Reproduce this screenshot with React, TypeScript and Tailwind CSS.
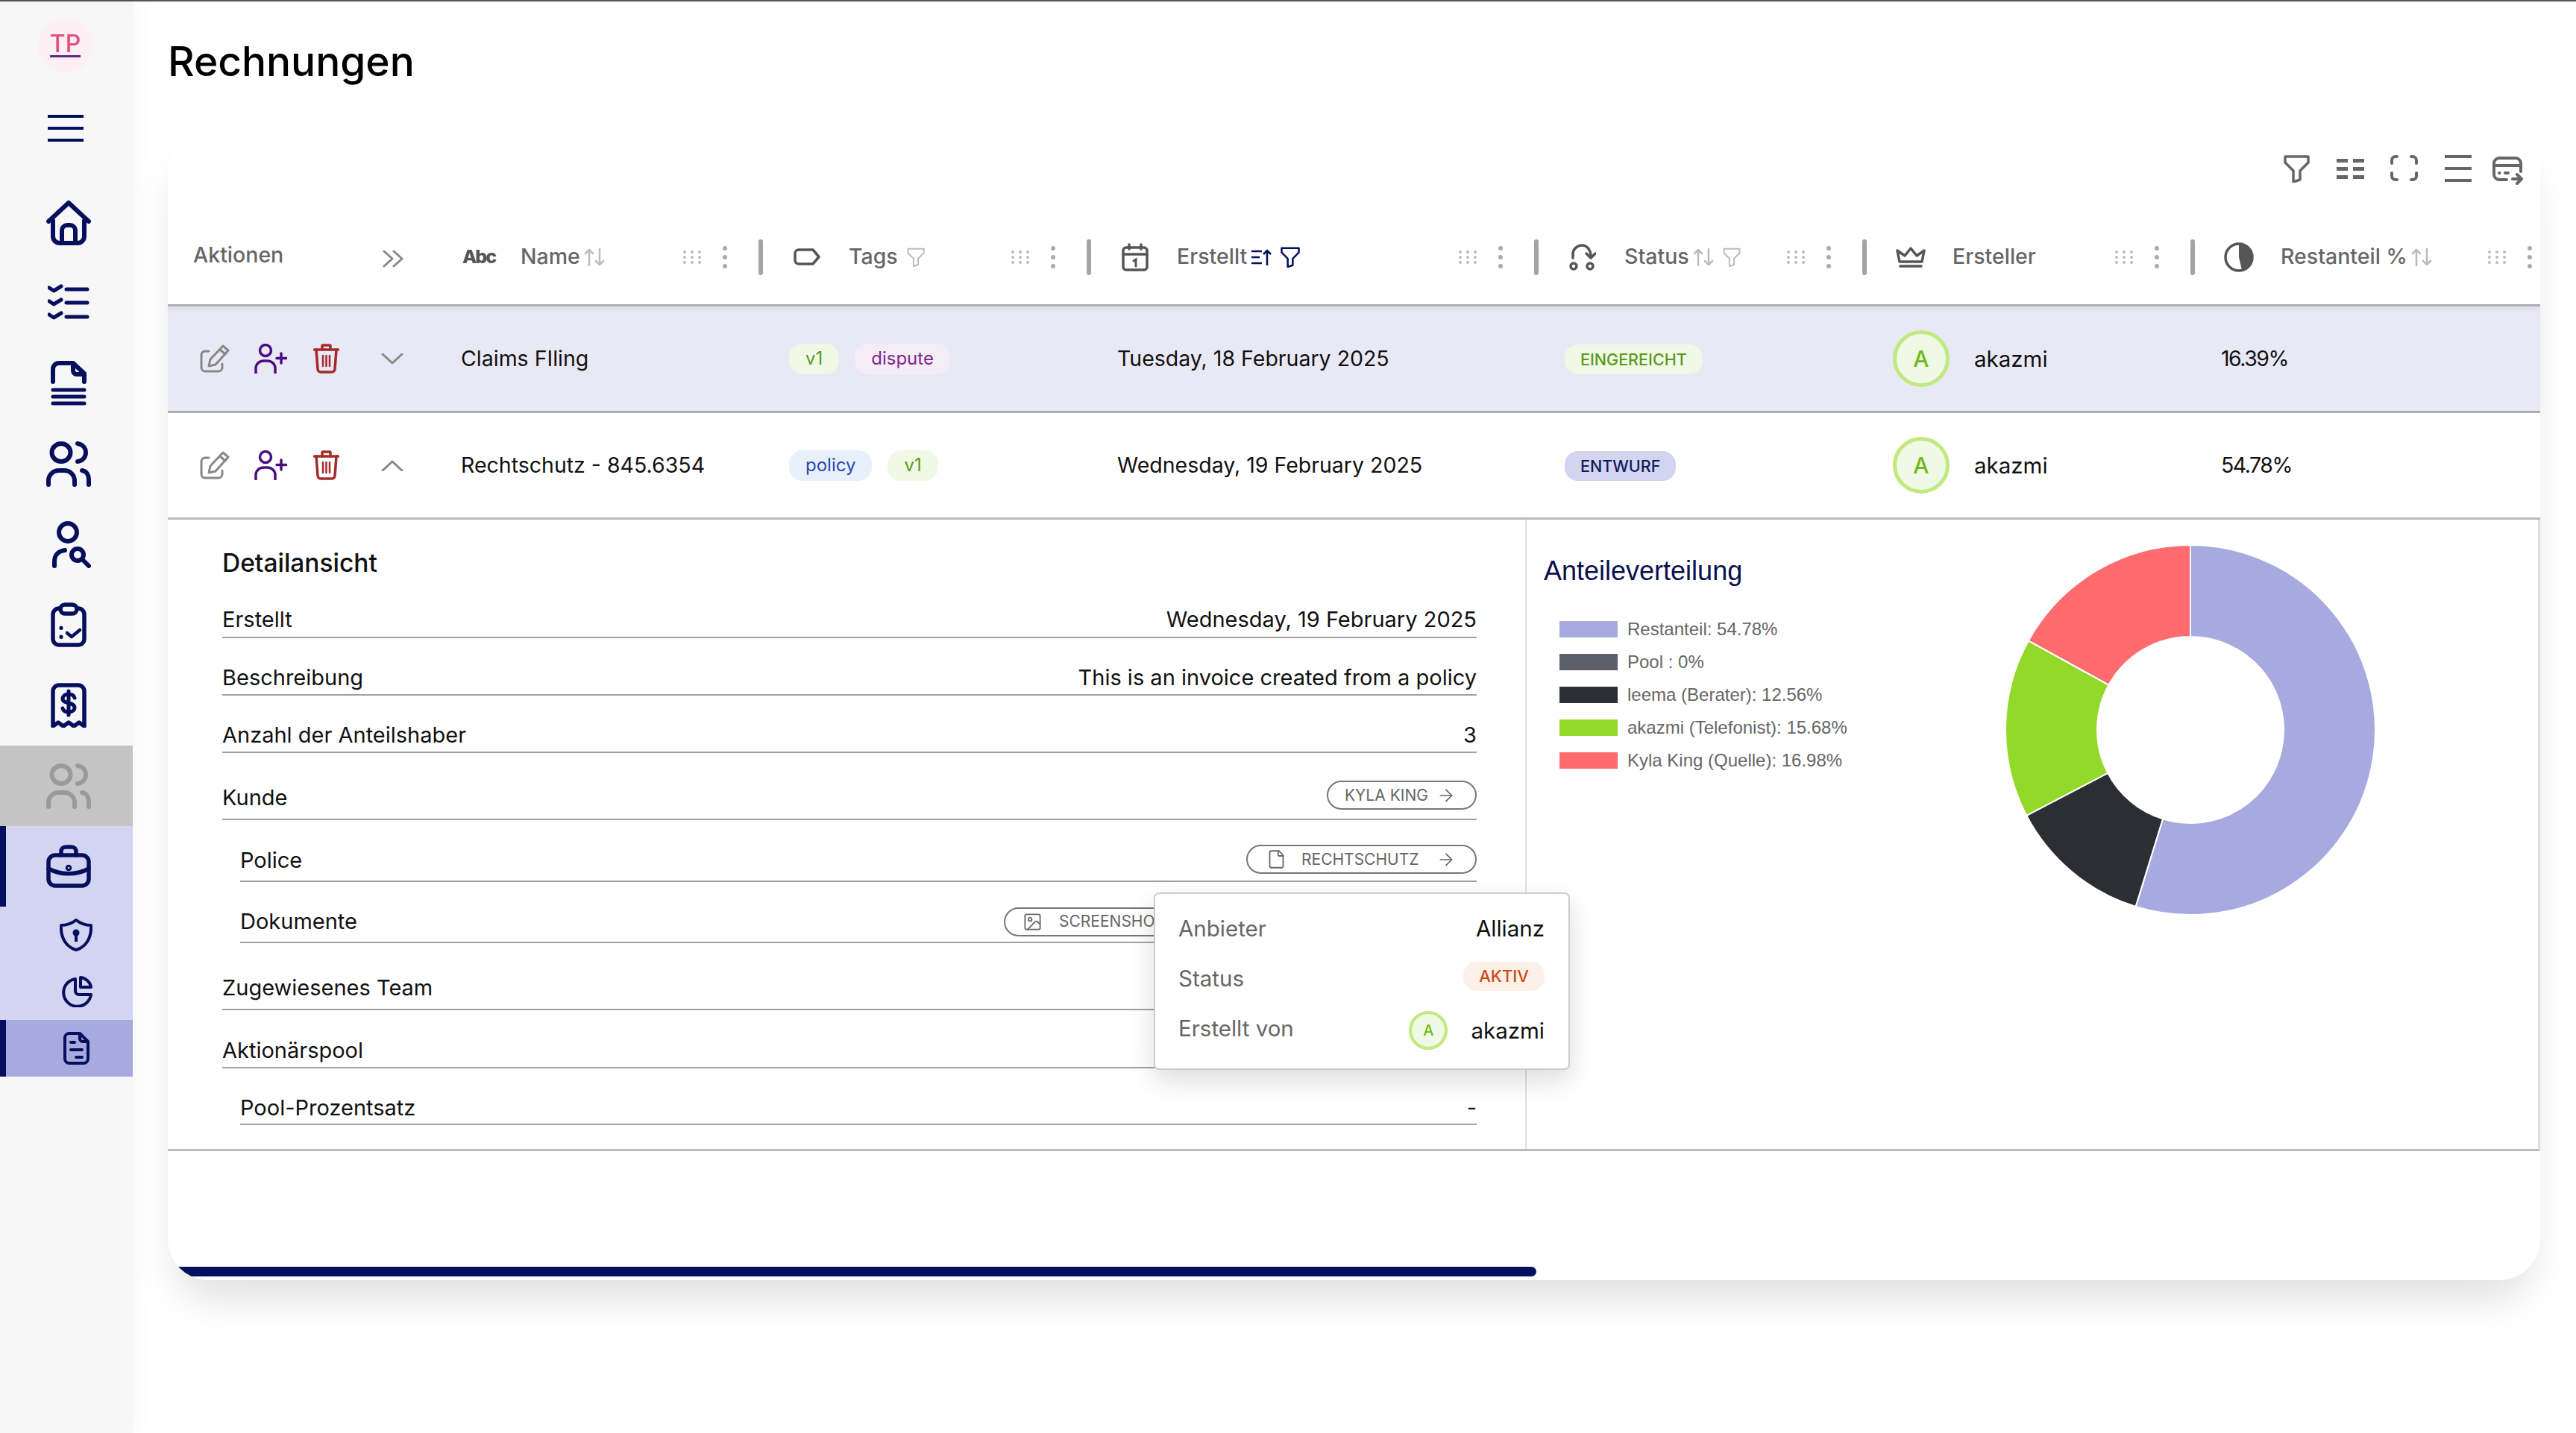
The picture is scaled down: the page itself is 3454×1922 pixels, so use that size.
import React from 'react'
import { ArrowRight, File, Image } from 'lucide-react'

const navy = '#050f5c'

const HomeIcon = () => (
  <svg width="60" height="61" viewBox="0 0 60 61" fill="none" stroke="currentColor" strokeWidth="6" strokeLinecap="round" strokeLinejoin="round">
    <path d="M3 29 30 4l27 25" />
    <path d="M9 28v21a9 9 0 0 0 9 9h24a9 9 0 0 0 9-9V28" />
    <path d="M21 58V41a7 7 0 0 1 7-7h4a7 7 0 0 1 7 7v17" />
  </svg>
)
const ListIcon = () => (
  <svg width="56" height="50" viewBox="0 0 56 50" fill="none" stroke="currentColor" strokeWidth="5" strokeLinecap="round" strokeLinejoin="round">
    <path d="M2 5l6 4 10-6M2 23l6 4 10-6M2 41l6 4 10-6" />
    <path d="M25 7h28M25 25h28M25 44h28" />
  </svg>
)
const DocStackIcon = () => (
  <svg width="48" height="60" viewBox="0 0 48 60" fill="none" stroke="currentColor" strokeLinecap="round" strokeLinejoin="round">
    <path strokeWidth="6" d="M3 28V11a8 8 0 0 1 8-8h19l15 14v11" />
    <path strokeWidth="6" d="M30 4v9a5 5 0 0 0 5 5h9" />
    <path strokeWidth="5" d="M3 39h42M3 48h42M3 57h42" />
  </svg>
)
const UsersIcon = () => (
  <svg width="60" height="61" viewBox="0 0 60 61" fill="none" stroke="currentColor" strokeWidth="6" strokeLinecap="round">
    <ellipse cx="20" cy="15" rx="12.5" ry="12" />
    <path d="M42 3c7 1 11 6 11 12s-4 11-11 12" />
    <path d="M3 58v-5c0-8 6-14 14-14h7c8 0 14 6 14 14v5" />
    <path d="M48 39c6 1 9 6 9 12v7" />
  </svg>
)
const UserSearchIcon = () => (
  <svg width="52" height="63" viewBox="0 0 52 63" fill="none" stroke="currentColor" strokeWidth="6" strokeLinecap="round">
    <circle cx="21" cy="15" r="12" />
    <path d="M3 60v-6c0-8 5-14 14-15" />
    <circle cx="34" cy="45" r="8" />
    <path d="M40 51l9 9" />
  </svg>
)
const ClipboardIcon = () => (
  <svg width="48" height="60" viewBox="0 0 48 60" fill="none" stroke="currentColor" strokeLinecap="round" strokeLinejoin="round">
    <path strokeWidth="5.5" d="M12 8h-1a8 8 0 0 0-8 8v33a8 8 0 0 0 8 8h26a8 8 0 0 0 8-8V16a8 8 0 0 0-8-8h-1" />
    <rect strokeWidth="5.5" x="13" y="3" width="22" height="12" rx="6" />
    <path strokeWidth="4.5" d="M22 41l6 5 11-9" />
    <path strokeWidth="5" d="M14 34v.5M14 46v.5" />
  </svg>
)
const ReceiptIcon = () => (
  <svg width="48" height="60" viewBox="0 0 48 60" fill="none" stroke="currentColor" strokeLinejoin="round" strokeLinecap="round">
    <path strokeWidth="5.5" d="M3 58V11a8 8 0 0 1 8-8h26a8 8 0 0 1 8 8v47l-7-5-7 5-7-5-7 5-7-5-7 5z" />
    <path strokeWidth="5" d="M32 20c-1-4-5-5-8-5-5 0-8 3-8 6 0 8 16 4 16 12 0 4-4 6-8 6-3 0-7-1-8-5M24 11v32" />
  </svg>
)
const BriefcaseIcon = () => (
  <svg width="60" height="58" viewBox="0 0 60 58" fill="none" stroke="currentColor" strokeWidth="5.5" strokeLinecap="round">
    <rect x="3" y="14" width="54" height="41" rx="9" />
    <path d="M20 14V9a6 6 0 0 1 6-6h8a6 6 0 0 1 6 6v5" />
    <path d="M3 32c16 9 38 9 54 0" />
    <circle cx="30" cy="31" r="1.5" />
  </svg>
)
const ShieldIcon = () => (
  <svg width="44" height="44" viewBox="0 0 44 44" fill="none" stroke="currentColor" strokeWidth="4" strokeLinejoin="round">
    <path d="M22 2c5 4 13 7 20 7 1 16-6 29-20 33C8 38 1 25 2 9c7 0 15-3 20-7z" />
    <circle cx="22" cy="19" r="4.5" fill="currentColor" stroke="none" />
    <rect x="20" y="20" width="4" height="11" fill="currentColor" stroke="none" />
  </svg>
)
const PieIcon = () => (
  <svg width="44" height="42" viewBox="0 0 44 42" fill="none" stroke="currentColor" strokeWidth="4" strokeLinejoin="round" strokeLinecap="round">
    <path d="M21 4A18.500 18.500 0 1 0 42 25H26a5 5 0 0 1-5-5z" />
    <path d="M28 2v13h14C41 8 35 3 28 2z" />
  </svg>
)
const InvoiceIcon = () => (
  <svg width="35" height="44" viewBox="0 0 35 44" fill="none" stroke="currentColor" strokeWidth="4" strokeLinecap="round" strokeLinejoin="round">
    <path d="M2 8a6 6 0 0 1 6-6h14l11 11v23a6 6 0 0 1-6 6H8a6 6 0 0 1-6-6z" />
    <path d="M22 3v6a4 4 0 0 0 4 4h6" />
    <path d="M10 14h5M10 24h15M17 34h8" />
  </svg>
)
const Hamburger = () => (
  <svg width="48" height="36" viewBox="0 0 48 36" fill="currentColor">
    <rect y="0" width="48" height="4" />
    <rect y="16" width="48" height="4" />
    <rect y="32" width="48" height="4" />
  </svg>
)

const Funnel = ({ size = 35, color = '#666', sw = 3.5 }: { size?: number; color?: string; sw?: number }) => (
  <svg width={size} height={size + 2} viewBox="0 0 35 37" fill="none" stroke={color} strokeWidth={sw * 35 / size} strokeLinejoin="round">
    <path d="M2 2h31v8L22 21v12l-9 3V21L2 10z" />
  </svg>
)
const ColumnsIcon = () => (
  <svg width="37" height="27" viewBox="0 0 37 27" fill="#666">
    <rect width="15" height="5" />
    <rect x="22" width="15" height="5" />
    <rect y="11" width="15" height="5" />
    <rect x="22" y="11" width="15" height="5" />
    <rect y="22" width="15" height="5" />
    <rect x="22" y="22" width="15" height="5" />
  </svg>
)
const FullscreenIcon = () => (
  <svg width="37" height="35" viewBox="0 0 37 35" fill="none" stroke="#666" strokeWidth="4" strokeLinecap="round">
    <path d="M9 2H7a5 5 0 0 0-5 5v4M28 2h2a5 5 0 0 1 5 5v4M9 33H7a5 5 0 0 1-5-5v-4M28 33h2a5 5 0 0 0 5-5v-4" />
  </svg>
)
const DensityIcon = () => (
  <svg width="36" height="36" viewBox="0 0 36 36" fill="#666">
    <rect width="36" height="4" />
    <rect y="16" width="36" height="4" />
    <rect y="32" width="36" height="4" />
  </svg>
)
const ExportIcon = () => (
  <svg width="42" height="38" viewBox="0 0 42 38" fill="none" stroke="#666" strokeWidth="4" strokeLinecap="round" strokeLinejoin="round">
    <path d="M38 20V9a7 7 0 0 0-7-7H9a7 7 0 0 0-7 7v15a7 7 0 0 0 7 7h10" />
    <path d="M2 12h36" />
    <path d="M9 22h.5M17 22h4" />
    <path d="M27 30h12M33 24l6 6-6 6" />
  </svg>
)
const SortIcon = () => (
  <svg width="28" height="24" viewBox="0 0 28 24" fill="none" stroke="#bbb" strokeWidth="2.5" strokeLinecap="round" strokeLinejoin="round">
    <path d="M7 23V2M2 7l5-5 5 5" />
    <path d="M21 1v21M16 17l5 5 5-5" />
  </svg>
)
const SortActiveIcon = () => (
  <svg width="28" height="24" viewBox="0 0 28 24" fill="none" stroke={navy} strokeWidth="2.5">
    <path d="M1 4h14M1 12h11M1 20h14" />
    <path d="M22 23V3M17 8l5-5 5 5" />
  </svg>
)
const DragDots = () => (
  <span className="grid grid-cols-3 gap-x-[6px] gap-y-[3px] w-[24px]">
    {Array.from({ length: 9 }).map((_, i) => (
      <span key={i} className="w-[4px] h-[4px] rounded-full bg-[#bbb]" />
    ))}
  </span>
)
const VerticalDots = () => (
  <span className="flex flex-col gap-[6px]">
    <span className="w-[6px] h-[6px] rounded-full bg-[#aaa]" />
    <span className="w-[6px] h-[6px] rounded-full bg-[#aaa]" />
    <span className="w-[6px] h-[6px] rounded-full bg-[#aaa]" />
  </span>
)

const TagIcon = () => (
  <svg width="36" height="23" viewBox="0 0 36 23" fill="none" stroke="#555" strokeWidth="3.5" strokeLinejoin="round">
    <path d="M7 2h19l8 9.500-8 9.500H7a5 5 0 0 1-5-5V7a5 5 0 0 1 5-5z" />
  </svg>
)
const CalendarIcon = () => (
  <svg width="36" height="38" viewBox="0 0 36 38" fill="none" stroke="#555" strokeWidth="3.5" strokeLinecap="round">
    <rect x="2" y="6" width="32" height="30" rx="4" />
    <path d="M2 15h32M10 2v6M26 2v6" />
    <path strokeWidth="3" d="M16 24l3-2v9" />
  </svg>
)
const StatusIcon = () => (
  <svg width="36" height="36" viewBox="0 0 36 36" fill="none" stroke="#555" strokeWidth="3.5" strokeLinecap="round" strokeLinejoin="round">
    <circle cx="6" cy="30" r="4" />
    <circle cx="28" cy="30" r="4" />
    <path d="M5 19v-5C5 7 11 2 17 2c7 0 12 6 12 15" />
    <path d="M23 13l6 6 6-6" />
  </svg>
)
const CrownIcon = () => (
  <svg width="40" height="28" viewBox="0 0 40 28" fill="none" stroke="#555" strokeWidth="3.5" strokeLinejoin="round" strokeLinecap="round">
    <path d="M5 20L2 5l10 7 8-10 8 10 10-7-3 15z" />
    <path d="M6 26h28" />
  </svg>
)
const ShareIcon = () => (
  <svg width="40" height="40" viewBox="0 0 40 40">
    <circle cx="20" cy="20" r="18" fill="none" stroke="#555" strokeWidth="3.5" />
    <path d="M20 20V2a18 18 0 0 1 4 35.500z" fill="#555" />
  </svg>
)

const EditIcon = () => (
  <svg width="40" height="38" viewBox="0 0 40 38" fill="none" stroke="#888" strokeWidth="3" strokeLinecap="round" strokeLinejoin="round">
    <path d="M12 9H7a5 5 0 0 0-5 5v17a5 5 0 0 0 5 5h18a5 5 0 0 0 5-5v-5" />
    <path d="M31 2l7 6-17 19-9 2 2-9z" />
    <path d="M27 7l7 6" />
  </svg>
)
const PersonPlusIcon = () => (
  <svg width="44" height="40" viewBox="0 0 44 40" fill="none" stroke="#4b0e82" strokeWidth="3.5" strokeLinecap="round">
    <circle cx="15" cy="9" r="7.500" />
    <path d="M2 39v-6c0-6 5-10 11-10h4c6 0 11 4 11 10v6" />
    <path d="M36 13v13M30 19.500h13" />
  </svg>
)
const TrashIcon = () => (
  <svg width="35" height="40" viewBox="0 0 35 40" fill="none" stroke="#a52a2a" strokeWidth="3.5" strokeLinecap="round" strokeLinejoin="round">
    <path d="M1.500 8h32" />
    <path d="M12 8V3a1 1 0 0 1 1-1h9a1 1 0 0 1 1 1v5" />
    <path d="M4 8l2 26a4 4 0 0 0 4 4h15a4 4 0 0 0 4-4l2-26" />
    <path strokeWidth="2.500" d="M13 16v14M17.500 16v14M22 16v14" />
  </svg>
)
const Chevron = ({ up }: { up?: boolean }) => (
  <svg width="30" height="15" viewBox="0 0 30 15" fill="none" stroke="#888" strokeWidth="3" strokeLinecap="round" strokeLinejoin="round">
    <path d={up ? 'M2 14 15 2l13 12' : 'M2 1l13 12L28 1'} />
  </svg>
)
const DoubleChevron = () => (
  <svg width="28" height="24" viewBox="0 0 28 24" fill="none" stroke="#888" strokeWidth="3" strokeLinecap="round" strokeLinejoin="round">
    <path d="M2 2l11 10L2 22M15 2l11 10-11 10" />
  </svg>
)

const HeaderCell = ({ label, icon, sort, filter, sep = true, last }: { label: string; icon: React.ReactNode; sort?: React.ReactNode; filter?: React.ReactNode; sep?: boolean; last?: boolean }) => (
  <div className="flex items-center h-full">
    {sep && <span className="w-[6px] h-[48px] -ml-[3px] -mr-[3px] rounded-full bg-[#a4a4a4]" />}
    <span className="ml-[42px] w-[40px] flex justify-center">{icon}</span>
    <span className="ml-[36px] text-[#666] text-[28.500px] font-medium whitespace-nowrap">{label}</span>
    {sort && <span className="ml-[5px] flex">{sort}</span>}
    {filter && <span className="ml-[12px] flex">{filter}</span>}
    <span className={`ml-auto flex items-center gap-[29px] ${last ? 'pr-[11px]' : 'pr-[45px]'}`}>
      <DragDots />
      <VerticalDots />
    </span>
  </div>
)

const Chip = ({ bg, color, children }: { bg: string; color: string; children: string }) => (
  <span className={`${bg} ${color} h-[41px] px-[22px] rounded-[18px] flex items-center text-[24px]`}>{children}</span>
)

const Avatar = () => (
  <span className="w-[76px] h-[76px] rounded-full border-[5px] border-[#c0e97e] bg-[#f0f9e6] text-[#6cbb1a] text-[30px] font-medium flex items-center justify-center">A</span>
)

const Row = ({ up, name, chips, date, status, percent, className }: { up?: boolean; name: string; chips: React.ReactNode; date: string; status: React.ReactNode; percent: string; className: string }) => (
  <div className={`grid grid-cols-[355px_440px_440px_600px_440px_440px_1fr] items-center h-[143px] ${className}`}>
    <div className="flex items-center pl-[43px]">
      <EditIcon />
      <span className="ml-[33px] flex"><PersonPlusIcon /></span>
      <span className="ml-[35px] flex"><TrashIcon /></span>
      <span className="ml-[56px] flex"><Chevron up={up} /></span>
    </div>
    <div className="pl-[38px] text-[28.500px] text-[#111]">{name}</div>
    <div className="pl-[38px] flex gap-[21px]">{chips}</div>
    <div className="pl-[38px] text-[28.500px] text-[#111]">{date}</div>
    <div className="pl-[38px] flex mt-[2px]">{status}</div>
    <div className="pl-[38px] flex items-center gap-[33px] text-[29.500px] text-[#111]"><Avatar />akazmi</div>
    <div className="pl-[38px] text-[28.500px] tracking-[-1.500px] text-[#111]">{percent}</div>
  </div>
)

const segments = [
  { value: 54.78, color: '#a6aadf' },
  { value: 12.56, color: '#2d2e34' },
  { value: 15.68, color: '#93d92a' },
  { value: 16.98, color: '#ff6b6e' },
]

const arcPath = (from: number, to: number) => {
  const p = (pct: number, r: number) => {
    const a = (pct / 100) * 2 * Math.PI
    return `${250 + r * Math.sin(a)} ${250 - r * Math.cos(a)}`
  }
  const large = to - from > 50 ? 1 : 0
  return `M${p(from, 248)}A248 248 0 ${large} 1 ${p(to, 248)}L${p(to, 125)}A125 125 0 ${large} 0 ${p(from, 125)}Z`
}

const Donut = () => {
  let start = 0
  return (
    <svg width="500" height="500" viewBox="0 0 500 500">
      {segments.map((s) => {
        const d = arcPath(start, start + s.value)
        start += s.value
        return <path key={s.color} d={d} fill={s.color} stroke="#fff" strokeWidth="2" />
      })}
    </svg>
  )
}

const legend = [
  { label: 'Restanteil: 54.78%', swatch: 'bg-[#a6aadf]' },
  { label: 'Pool : 0%', swatch: 'bg-[#5b5f6b]' },
  { label: 'leema (Berater): 12.56%', swatch: 'bg-[#2d2e34]' },
  { label: 'akazmi (Telefonist): 15.68%', swatch: 'bg-[#93d92a]' },
  { label: 'Kyla King (Quelle): 16.98%', swatch: 'bg-[#ff6b6e]' },
]

const PillLink = ({ icon, children, className }: { icon?: React.ReactNode; children: string; className: string }) => (
  <span className={`h-[39px] rounded-full border-2 border-[#777] flex items-center text-[#666] text-[21px] whitespace-nowrap ${className}`}>
    {icon}
    {children}
    <ArrowRight className="ml-auto" size={26} strokeWidth={1.6} />
  </span>
)

const App = () => {
  return (
    <div className="w-[3454px] h-[1922px] flex overflow-hidden bg-white border-t-2 border-[#555] font-['Inter',sans-serif]">
      <aside className="w-[178px] shrink-0 bg-[#f7f7f8] shadow-[8px_0_24px_rgba(0,0,0,0.03)] flex flex-col text-[#050f5c] z-10">
        <div className="mt-[22px] ml-[50px] w-[75px] h-[73px] rounded-full bg-[#fdf0f5] flex items-center justify-center">
          <span className="text-[#e0507f] text-[32px] leading-[30px] font-medium border-b-[3px] border-[#5a2a80]">TP</span>
        </div>
        <div className="mt-[57px] ml-[64px] flex"><Hamburger /></div>
        <div className="mt-[54px] h-[108px] flex items-center justify-center pl-[6px]"><HomeIcon /></div>
        <div className="h-[108px] flex items-center justify-center pl-[6px]"><ListIcon /></div>
        <div className="h-[108px] flex items-center justify-center pl-[6px]"><DocStackIcon /></div>
        <div className="h-[108px] flex items-center justify-center pl-[6px]"><UsersIcon /></div>
        <div className="h-[108px] flex items-center justify-center pl-[14px]"><UserSearchIcon /></div>
        <div className="h-[108px] flex items-center justify-center pl-[6px]"><ClipboardIcon /></div>
        <div className="h-[108px] flex items-center justify-center pl-[6px]"><ReceiptIcon /></div>
        <div className="h-[108px] flex items-center justify-center pl-[6px] bg-[#c4c4c4] text-[#9a9a9a]"><UsersIcon /></div>
        <div className="bg-[#d2d4f2]">
          <div className="h-[108px] flex items-center justify-center pl-[6px] border-l-[8px] border-[#050f5c]"><span className="-ml-[8px] flex"><BriefcaseIcon /></span></div>
          <div className="h-[76px] flex items-center pl-[80px]"><ShieldIcon /></div>
          <div className="h-[76px] flex items-center pl-[80px]"><PieIcon /></div>
          <div className="h-[76px] flex items-center pl-[77px] bg-[#a6aadf] border-l-[8px] border-[#050f5c]"><InvoiceIcon /></div>
        </div>
      </aside>

      <main className="flex-1 pl-[47px] pr-[48px]">
        <div className="h-[173px] pt-[48px]">
          <h1 className="text-[55px] leading-[64px] font-medium text-black">Rechnungen</h1>
        </div>
        <div className="relative h-[1542px] rounded-[55px] bg-white shadow-[0_36px_60px_-16px_rgba(0,0,0,0.14)] overflow-hidden flex flex-col">
          <div className="h-[106px] pt-[33px] pr-[22px] flex items-start justify-end">
            <Funnel />
            <span className="ml-[36px] mt-[5px] flex"><ColumnsIcon /></span>
            <span className="ml-[35px] flex"><FullscreenIcon /></span>
            <span className="ml-[36px] flex"><DensityIcon /></span>
            <span className="ml-[28px] mt-[2px] flex"><ExportIcon /></span>
          </div>

          <div className="grid grid-cols-[355px_440px_440px_600px_440px_440px_1fr] items-center h-[130px] border-b-[3px] border-[#aeaeb4]">
            <div className="flex items-center justify-between pl-[34px] pr-[39px]">
              <span className="text-[#666] text-[28.500px] font-medium -mt-[4px]">Aktionen</span>
              <span className="flex mt-[4px]"><DoubleChevron /></span>
            </div>
            <HeaderCell sep={false} label="Name" sort={<SortIcon />} icon={<span className="text-[#555] text-[25px] font-extrabold tracking-[-2px]">Abc</span>} />
            <HeaderCell label="Tags" icon={<TagIcon />} filter={<Funnel size={24} color="#bbb" sw={2} />} />
            <HeaderCell label="Erstellt" icon={<CalendarIcon />} sort={<SortActiveIcon />} filter={<Funnel size={26} color={navy} sw={2.500} />} />
            <HeaderCell label="Status" icon={<StatusIcon />} sort={<SortIcon />} filter={<Funnel size={24} color="#bbb" sw={2} />} />
            <HeaderCell label="Ersteller" icon={<CrownIcon />} />
            <HeaderCell last label="Restanteil %" icon={<ShareIcon />} sort={<SortIcon />} />
          </div>

          <Row
            className="bg-[#e9e9f6] border-b-[3px] border-[#aeaeb4] shadow-[inset_0_8px_8px_-6px_rgba(0,0,0,0.08)]"
            name="Claims FIling"
            date="Tuesday, 18 February 2025"
            percent="16.39%"
            chips={
              <>
                <Chip bg="bg-[#f0f9e6]" color="text-[#5a9a1a]">v1</Chip>
                <Chip bg="bg-[#f6ecf8]" color="text-[#7a2a8a]">dispute</Chip>
              </>
            }
            status={<span className="h-[40px] px-[21px] rounded-[18px] bg-[#f0f9e6] text-[#5a9a1a] text-[21.500px] font-medium flex items-center">EINGEREICHT</span>}
          />
          <Row
            up
            className="border-b-[3px] border-[#bbb]"
            name="Rechtschutz - 845.6354"
            date="Wednesday, 19 February 2025"
            percent="54.78%"
            chips={
              <>
                <Chip bg="bg-[#e8f0fc]" color="text-[#2a48b0]">policy</Chip>
                <Chip bg="bg-[#f0f9e6]" color="text-[#5a9a1a]">v1</Chip>
              </>
            }
            status={<span className="h-[40px] px-[21px] rounded-[18px] bg-[#d2d4f0] text-[#101a5a] text-[21.500px] font-medium flex items-center">ENTWURF</span>}
          />

          <div className="flex h-[847px] border-b-[3px] border-r-[3px] border-[#ddd] border-b-[#bbb]">
            <div className="w-[1822px] pl-[73px] pr-[65px] border-r-2 border-[#e0e0e0] text-[#111] text-[29px] shrink-0">
              <h2 className="pt-[35px] leading-[46px] text-[33.500px] font-medium">Detailansicht</h2>
              <div className="mt-[30px] h-[48px] flex items-center justify-between border-b-2 border-[#a0a0a0]"><span>Erstellt</span><span>Wednesday, 19 February 2025</span></div>
              <div className="mt-[31px] h-[46px] flex items-center justify-between border-b-2 border-[#a0a0a0]"><span>Beschreibung</span><span>This is an invoice created from a policy</span></div>
              <div className="mt-[31px] h-[46px] flex items-center justify-between border-b-2 border-[#a0a0a0]"><span>Anzahl der Anteilshaber</span><span>3</span></div>
              <div className="mt-[32px] h-[58px] flex items-center justify-between border-b-2 border-[#a0a0a0]">
                <span>Kunde</span>
                <PillLink className="w-[201px] pl-[22px] pr-[26px] -mt-[7px]">KYLA KING</PillLink>
              </div>
              <div className="mt-[27px] ml-[24px] h-[56px] flex items-center justify-between border-b-2 border-[#a0a0a0]">
                <span>Police</span>
                <PillLink className="w-[309px] pl-[25px] pr-[26px] gap-[20px] -mt-[3px]" icon={<File size={27} strokeWidth={1.6} />}>RECHTSCHUTZ</PillLink>
              </div>
              <div className="mt-[26px] ml-[24px] h-[56px] flex items-center justify-between border-b-2 border-[#a0a0a0]">
                <span>Dokumente</span>
                <PillLink className="w-[634px] pl-[23px] pr-[26px] gap-[22px]" icon={<Image size={27} strokeWidth={1.6} />}>SCREENSHOT</PillLink>
              </div>
              <div className="mt-[32px] h-[58px] flex items-center border-b-2 border-[#a0a0a0]">Zugewiesenes Team</div>
              <div className="mt-[32px] h-[46px] flex items-center border-b-2 border-[#a0a0a0]">Aktionärspool</div>
              <div className="mt-[32px] ml-[24px] h-[44px] flex items-center justify-between border-b-2 border-[#a0a0a0]"><span>Pool-Prozentsatz</span><span>-</span></div>
            </div>

            <div className="flex-1 flex">
              <div className="pl-[23px] w-[642px] shrink-0">
                <h3 className="mt-[47px] text-[36px] leading-[44px] text-[#0a1050] font-['Liberation_Sans',sans-serif]">Anteileverteilung</h3>
                <div className="mt-[45px] ml-[21px] flex flex-col gap-[22px] font-['Liberation_Sans',sans-serif]">
                  {legend.map((l) => (
                    <div key={l.label} className="flex items-center h-[22px] gap-[13px] text-[#666] text-[24px]">
                      <span className={`w-[78px] h-[22px] ${l.swatch}`} />
                      {l.label}
                    </div>
                  ))}
                </div>
              </div>
              <div className="pt-[32px] -ml-[2px]"><Donut /></div>
            </div>
          </div>

          <div className="mt-auto mb-[5px] w-[1835px] h-[13px] rounded-r-full bg-[#050f5c]" />

          <div className="absolute left-[1322px] top-[1022px] w-[558px] h-[238px] bg-white border-2 border-[#ccc] rounded-[7px] shadow-[0_14px_36px_rgba(0,0,0,0.14)] pl-[31px] pr-[32px] pt-[26px] text-[29.500px]">
            <div className="flex items-center justify-between h-[40px]">
              <span className="text-[#666]">Anbieter</span>
              <span className="text-[#111]">Allianz</span>
            </div>
            <div className="mt-[27px] flex items-center justify-between h-[40px]">
              <span className="text-[#666]">Status</span>
              <span className="h-[39px] w-[109px] -mt-[5px] rounded-[18px] bg-[#fdf0e6] text-[#c84a1a] text-[22px] font-medium flex items-center justify-center">AKTIV</span>
            </div>
            <div className="mt-[24px] flex items-center justify-between h-[52px]">
              <span className="text-[#666] -mt-[6px]">Erstellt von</span>
              <span className="flex items-center gap-[31px] text-[#111]">
                <span className="w-[52px] h-[52px] rounded-full border-[4px] border-[#c0e97e] bg-[#f0f9e6] text-[#6cbb1a] text-[20px] font-medium flex items-center justify-center">A</span>
                akazmi
              </span>
            </div>
          </div>
        </div>
      </main>
    </div>
  )
}

export default App
